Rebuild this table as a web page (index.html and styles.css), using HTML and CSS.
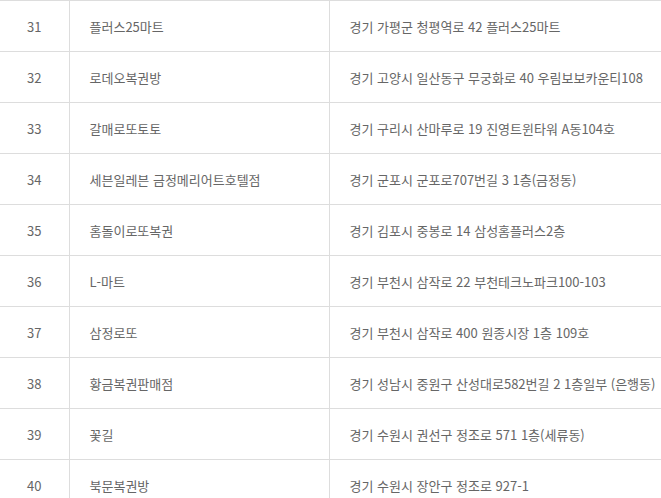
FILE: index.html
```html
<!DOCTYPE html>
<html lang="ko">
<head>
<meta charset="utf-8">
<link rel="stylesheet" href="styles.css">
</head>
<body>
<table class="list">
  <colgroup><col class="c-no"><col class="c-name"><col class="c-addr"></colgroup>
  <tbody>
    <tr><td class="no">31</td><td>플러스25마트</td><td>경기 가평군 청평역로 42 플러스25마트</td></tr>
    <tr><td class="no">32</td><td>로데오복권방</td><td>경기 고양시 일산동구 무궁화로 40 우림보보카운티108</td></tr>
    <tr><td class="no">33</td><td>갈매로또토토</td><td>경기 구리시 산마루로 19 진영트윈타워 A동104호</td></tr>
    <tr><td class="no">34</td><td>세븐일레븐 금정메리어트호텔점</td><td>경기 군포시 군포로707번길 3 1층(금정동)</td></tr>
    <tr><td class="no">35</td><td>홈돌이로또복권</td><td>경기 김포시 중봉로 14 삼성홈플러스2층</td></tr>
    <tr><td class="no">36</td><td>L-마트</td><td>경기 부천시 삼작로 22 부천테크노파크100-103</td></tr>
    <tr><td class="no">37</td><td>삼정로또</td><td>경기 부천시 삼작로 400 원종시장 1층 109호</td></tr>
    <tr><td class="no">38</td><td>황금복권판매점</td><td>경기 성남시 중원구 산성대로582번길 2 1층일부 (은행동)</td></tr>
    <tr><td class="no">39</td><td>꽃길</td><td>경기 수원시 권선구 정조로 571 1층(세류동)</td></tr>
    <tr><td class="no">40</td><td>북문복권방</td><td>경기 수원시 장안구 정조로 927-1</td></tr>
  </tbody>
</table>
</body>
</html>
```
FILE: styles.css
```css
html, body {
  margin: 0;
  padding: 0;
  background: #fff;
}
body {
  font-family: "Noto Sans CJK KR", "Noto Sans", sans-serif;
  font-size: 13px;
  color: #666;
}
.list {
  border-collapse: collapse;
  width: 100%;
  table-layout: fixed;
  border-top: 1px solid #ddd;
}
.c-no { width: 69px; }
.c-name { width: 260px; }
.list td {
  height: 50px;
  padding: 0 0 0 20px;
  border-bottom: 1px solid #ddd;
  border-right: 1px solid #ddd;
  vertical-align: middle;
  white-space: nowrap;
  overflow: hidden;
}
.list td:last-child { border-right: none; }
.list td.no {
  padding: 0;
  text-align: center;
}
```
